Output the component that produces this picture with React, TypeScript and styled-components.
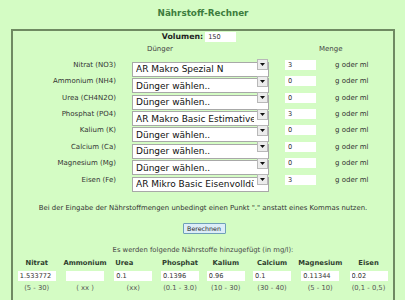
import React from "react";
import styled, { createGlobalStyle } from "styled-components";

const GlobalStyle = createGlobalStyle`
  html, body {
    margin: 0;
    padding: 0;
    background: #d4fcc4;
  }
  body {
    font-family: "DejaVu Sans", Verdana, sans-serif;
    color: #333;
  }
`;

interface INutrient {
  label: string;
  fertilizer: string;
  amount: string;
}

const nutrients: INutrient[] = [
  { label: "Nitrat (NO3)", fertilizer: "AR Makro Spezial N", amount: "3" },
  { label: "Ammonium (NH4)", fertilizer: "Dünger wählen..", amount: "0" },
  { label: "Urea (CH4N2O)", fertilizer: "Dünger wählen..", amount: "0" },
  { label: "Phosphat (PO4)", fertilizer: "AR Makro Basic Estimative", amount: "3" },
  { label: "Kalium (K)", fertilizer: "Dünger wählen..", amount: "0" },
  { label: "Calcium (Ca)", fertilizer: "Dünger wählen..", amount: "0" },
  { label: "Magnesium (Mg)", fertilizer: "Dünger wählen..", amount: "0" },
  { label: "Eisen (Fe)", fertilizer: "AR Mikro Basic Eisenvolldünger", amount: "3" },
];

const results = [
  { name: "Nitrat", value: "1.533772", range: "(5 - 30)" },
  { name: "Ammonium", value: "", range: "( xx )" },
  { name: "Urea", value: "0.1", range: "(xx)", shift: -9 },
  { name: "Phosphat", value: "0.1396", range: "(0.1 - 3.0)" },
  { name: "Kalium", value: "0.96", range: "(10 - 30)" },
  { name: "Calcium", value: "0.1", range: "(30 - 40)" },
  { name: "Magnesium", value: "0.11344", range: "(5 - 10)" },
  { name: "Eisen", value: "0.02", range: "(0,1 - 0,5)" },
];

const App: React.FC = () => {
  return (
    <>
      <GlobalStyle />
      <Page>
        <Title>Nährstoff-Rechner</Title>
        <Panel>
          <VolumeRow>
            <VolumeLabel>Volumen:</VolumeLabel>
            <SmallInput defaultValue="150" />
          </VolumeRow>
          <FormGrid>
            <span />
            <ColumnHead $indent={15}>Dünger</ColumnHead>
            <ColumnHead $indent={31} $span={2}>
              Menge
            </ColumnHead>
            {nutrients.map((n) => (
              <React.Fragment key={n.label}>
                <RowLabel>{n.label}</RowLabel>
                <SelectWrap>
                  <Select defaultValue={n.fertilizer}>
                    <option>Dünger wählen..</option>
                    {n.fertilizer !== "Dünger wählen.." && (
                      <option>{n.fertilizer}</option>
                    )}
                  </Select>
                  <Arrow>
                    <svg width="5" height="3" viewBox="0 0 5 3">
                      <path d="M0 0h5L2.5 3z" fill="#111" />
                    </svg>
                  </Arrow>
                </SelectWrap>
                <AmountCell>
                  <SmallInput defaultValue={n.amount} />
                </AmountCell>
                <Unit>g oder ml</Unit>
              </React.Fragment>
            ))}
          </FormGrid>
          <Note>
            Bei der Eingabe der Nährstoffmengen unbedingt einen Punkt "." anstatt
            eines Kommas nutzen.
          </Note>
          <ButtonRow>
            <Button>Berechnen</Button>
          </ButtonRow>
          <ResultIntro>
            Es werden folgende Nährstoffe hinzugefügt (in mg/l):
          </ResultIntro>
          <ResultGrid>
            {results.map((r) => (
              <ResultHead key={r.name} $shift={r.shift || 0}>
                {r.name}
              </ResultHead>
            ))}
            {results.map((r) => (
              <ResultCell key={r.name}>
                <ResultInput defaultValue={r.value} />
              </ResultCell>
            ))}
            {results.map((r) => (
              <Range key={r.name}>{r.range}</Range>
            ))}
          </ResultGrid>
        </Panel>
      </Page>
    </>
  );
};

export default App;

const Page = styled.div`
  width: 405px;
  height: 300px;
  overflow: hidden;
  padding: 0 10px 0 11px;
  box-sizing: border-box;
`;

const Title = styled.h1`
  margin: 0;
  height: 29px;
  line-height: 27px;
  text-align: center;
  font-size: 8.8px;
  font-weight: bold;
  color: #3d7d3d;
`;

const Panel = styled.div`
  border: 2px solid #6f8a62;
  border-bottom: none;
  height: 290px;
`;

const VolumeRow = styled.div`
  display: flex;
  justify-content: center;
  align-items: center;
  gap: 2px;
  margin: 0.5px 8px 0 0;
  height: 10px;
`;

const VolumeLabel = styled.span`
  font-size: 7.8px;
  font-weight: bold;
  color: #222;
`;

const SmallInput = styled.input`
  width: 31px;
  height: 10px;
  box-sizing: border-box;
  border: none;
  outline: none;
  background: #fff;
  font-family: "DejaVu Sans", Verdana, sans-serif;
  font-size: 6.6px;
  color: #333;
  padding: 0 3px;
  margin: 0;
`;

const FormGrid = styled.div`
  display: grid;
  grid-template-columns: 103px 137px 31px auto;
  grid-template-rows: 14.5px;
  grid-auto-rows: 15px;
  column-gap: 16px;
  row-gap: 1.4px;
  align-items: center;
  & > :nth-child(4n + 3) {
    margin-left: 3px;
  }
`;

const ColumnHead = styled.div<{ $indent: number; $span?: number }>`
  grid-column: span ${(p) => p.$span || 1};
  padding-left: ${(p) => p.$indent}px;
  font-size: 7px;
  color: #444;
  align-self: start;
  line-height: 14px;
`;

const RowLabel = styled.div`
  text-align: right;
  font-size: 7px;
  color: #333;
`;

const SelectWrap = styled.div`
  position: relative;
  width: 137px;
  height: 15px;
`;

const Select = styled.select`
  appearance: none;
  width: 100%;
  height: 100%;
  box-sizing: border-box;
  margin: 0;
  border: 1px solid #a8a8a8;
  border-radius: 0;
  background: #fff;
  font-family: "DejaVu Sans", Verdana, sans-serif;
  font-size: 9px;
  color: #111;
  padding: 0 14px 0 3px;
  outline: none;
`;

const Arrow = styled.div`
  position: absolute;
  right: 1px;
  top: 2px;
  width: 11px;
  height: 11px;
  box-sizing: border-box;
  background: #ececec;
  border: 1px solid #b8b8b8;
  display: flex;
  align-items: center;
  justify-content: center;
  pointer-events: none;
`;

const AmountCell = styled.div`
  display: flex;
  align-items: center;
`;

const Unit = styled.div`
  font-size: 7px;
  color: #333;
  margin-left: -8px;
`;

const Note = styled.p`
  margin: 17px 0 0;
  line-height: 9px;
  text-align: center;
  font-size: 6.9px;
  color: #333;
`;

const ButtonRow = styled.div`
  display: flex;
  justify-content: center;
  margin-top: 9.5px;
  padding-left: 2px;
`;

const Button = styled.button`
  height: 11px;
  width: 43px;
  padding: 0;
  box-sizing: border-box;
  border: 1px solid #6f9fb8;
  border-radius: 1px;
  background: #dcedf8;
  font-family: "DejaVu Sans", Verdana, sans-serif;
  font-size: 6.3px;
  color: #222;
  line-height: 9px;
`;

const ResultIntro = styled.p`
  margin: 12.5px 0 0;
  line-height: 9px;
  text-align: center;
  font-size: 6.8px;
  color: #444;
`;

const ResultGrid = styled.div`
  display: grid;
  grid-template-columns: 47.5px 49px 47.5px 46px 45.5px 47px 49.5px 47px;
  grid-template-rows: 9px 10px 9px;
  row-gap: 2.5px;
  margin-top: 4px;
`;

const ResultHead = styled.div<{ $shift: number }>`
  text-align: center;
  font-size: 6.8px;
  font-weight: bold;
  color: #2f3f2f;
  line-height: 9px;
  transform: translateX(${(p) => p.$shift}px);
`;

const ResultCell = styled.div`
  display: flex;
  justify-content: center;
`;

const ResultInput = styled.input`
  width: 38px;
  height: 10px;
  box-sizing: border-box;
  border: none;
  outline: none;
  background: #fff;
  font-family: "DejaVu Sans", Verdana, sans-serif;
  font-size: 6.6px;
  color: #333;
  padding: 0 2px;
  margin: 0;
`;

const Range = styled.div`
  text-align: center;
  font-size: 6.8px;
  color: #555;
  line-height: 9px;
  margin-top: 1px;
`;
